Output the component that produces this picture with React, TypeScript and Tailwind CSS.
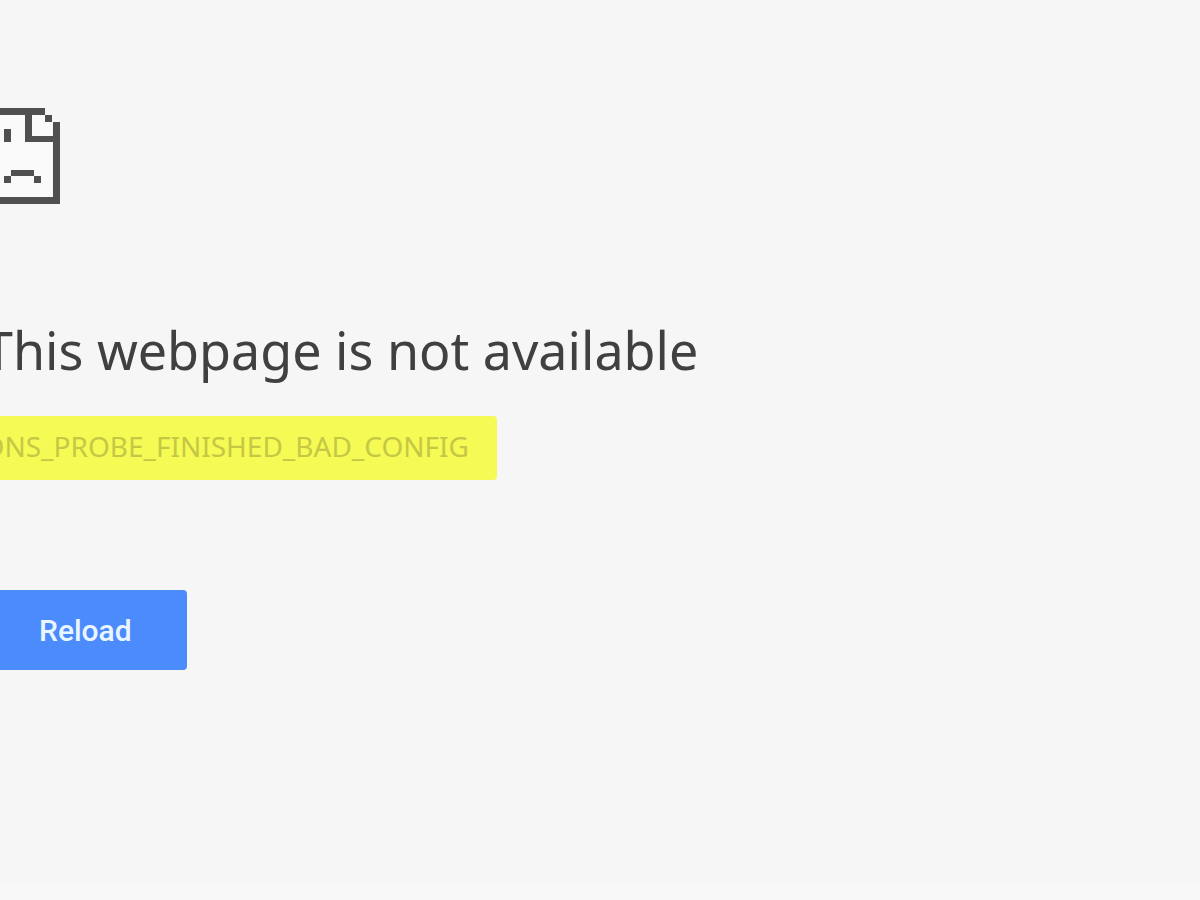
function SadPage() {
  return (
    <svg width="76" height="96" viewBox="0 0 76 96" aria-hidden="true">
      <path d="M3 3H61V10H68V93H3Z" fill="#fafafa" />
      <g fill="#505050">
        {/* outline */}
        <path d="M0 0H61V7H7V89H69V14H76V96H0Z" />
        {/* folded corner */}
        <path d="M61 7H68V14H61Z" />
        <path d="M41 7H48V28H69V34H41Z" />
        {/* eye */}
        <path d="M20 21H27V34H20Z" />
        {/* mouth */}
        <path d="M27 62H50V68H27Z" />
        <path d="M20 68H27V75H20Z" />
        <path d="M50 68H57V75H50Z" />
      </g>
    </svg>
  );
}

export default function App() {
  return (
    <div className="flex min-h-screen flex-col overflow-hidden bg-[#f6f6f6]">
      <main className="-ml-4 flex grow flex-col items-start pt-[108px]">
        <SadPage />
        <h1 className="mt-[110px] whitespace-nowrap font-['Noto_Sans',sans-serif] text-[52px] leading-[72px] text-[#404040]">
          This webpage is not available
        </h1>
        <p className="mt-[30px] rounded-r-sm bg-[#f6fa55] pr-7 pb-1 font-['Noto_Sans',sans-serif] text-[28px] leading-[60px] text-[#c5c844]">
          DNS_PROBE_FINISHED_BAD_CONFIG
        </p>
        <button
          type="button"
          className="mt-[110px] h-20 rounded-sm bg-[#4b8bfb] px-[55px] font-[Roboto,sans-serif] text-[30px] font-medium text-[#eaf6ff]"
        >
          Reload
        </button>
      </main>
      <footer className="h-4 bg-[#f8f8f8]" />
    </div>
  );
}
